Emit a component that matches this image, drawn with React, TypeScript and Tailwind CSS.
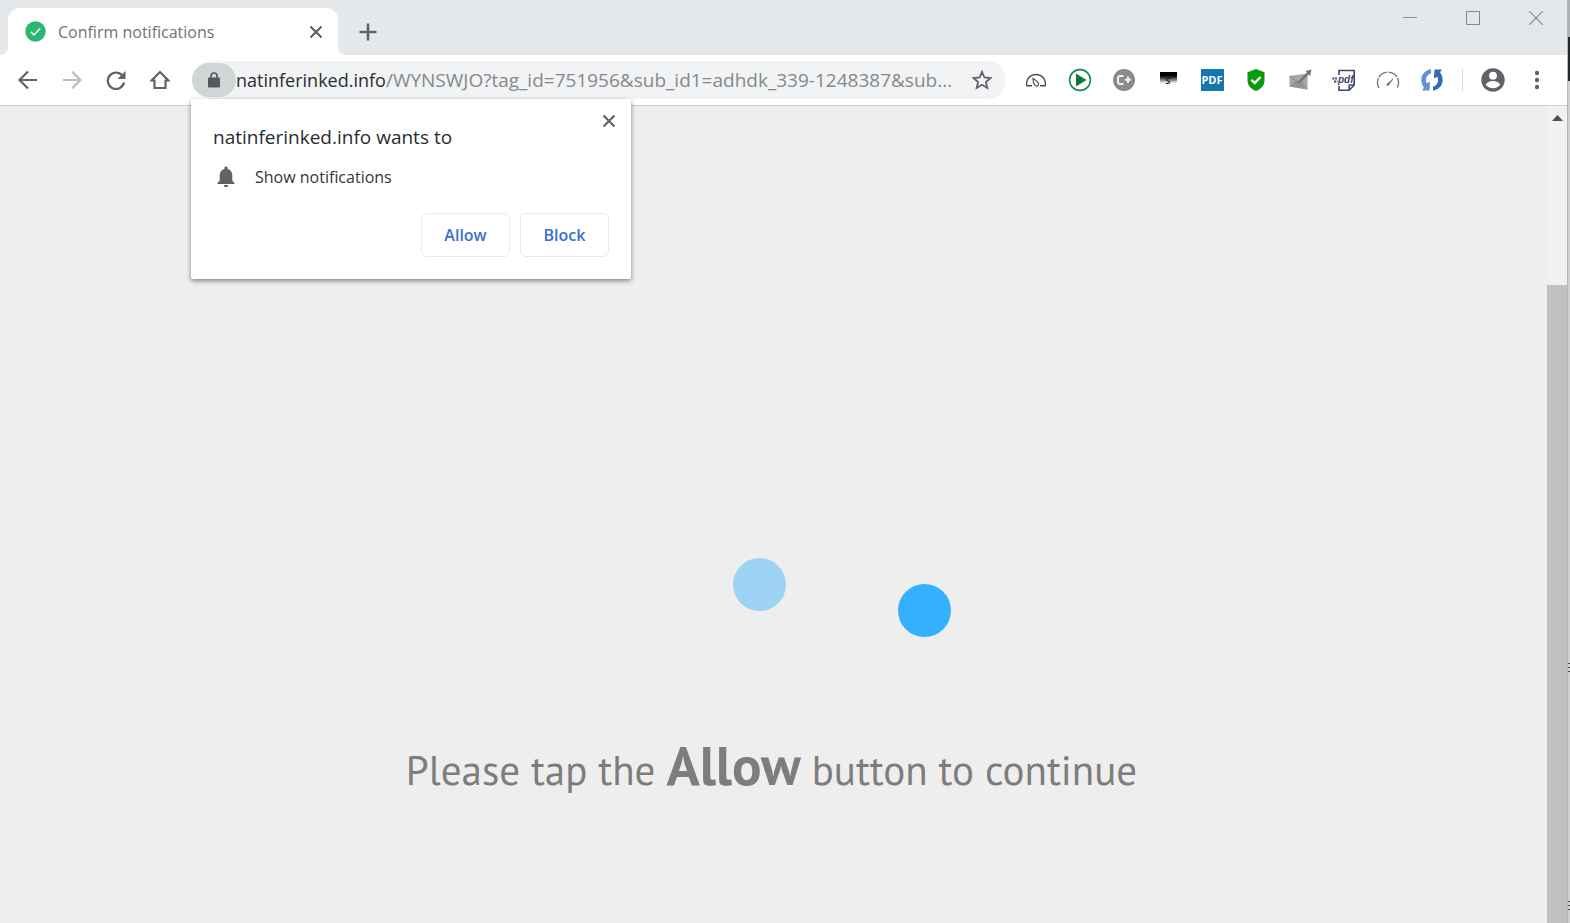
import type { FC, ReactNode } from 'react';

const URL_HOST = 'natinferinked.info';
const URL_PATH = '/WYNSWJO?tag_id=751956&sub_id1=adhdk_339-1248387&sub...';

interface IconButtonProps {
  label: string;
  children: ReactNode;
}

const IconButton: FC<IconButtonProps> = ({ label, children }) => (
  <button type="button" aria-label={label} className="flex size-11 shrink-0 items-center justify-center">
    {children}
  </button>
);

const CloseIcon: FC = () => (
  <svg width="14" height="14" viewBox="0 0 14 14" fill="none" stroke="#5f6368" strokeWidth="2.2">
    <path d="M1.5 1.5l11 11M12.5 1.5l-11 11" />
  </svg>
);

const TabStrip: FC = () => (
  <header className="flex h-[55px] items-end bg-[#e4e8eb]">
    <div className="h-2 w-2 bg-white">
      <div className="h-2 w-2 rounded-br-lg bg-[#e4e8eb]" />
    </div>
    <div className="flex h-[47px] w-[330px] items-center rounded-t-xl bg-white pl-[17px] pr-[15px]">
      <svg width="21" height="21" viewBox="0 0 21 21" fill="none">
        <circle cx="10.5" cy="10.5" r="10.2" fill="#2bb673" />
        <path d="M5.8 10.8l3.2 3.2 6.2-6.6" stroke="#fff" strokeWidth="1.4" />
      </svg>
      <span className="ml-3 flex-1 text-base leading-6 text-[#6f7377]">Confirm notifications</span>
      <button type="button" aria-label="Close tab">
        <CloseIcon />
      </button>
    </div>
    <div className="h-2 w-2 bg-white">
      <div className="h-2 w-2 rounded-bl-lg bg-[#e4e8eb]" />
    </div>
    <button type="button" aria-label="New tab" className="flex h-[47px] w-11 items-center justify-center">
      <svg width="18" height="18" viewBox="0 0 18 18" stroke="#5f6368" strokeWidth="2.6">
        <path d="M9 .5v17M.5 9h17" />
      </svg>
    </button>
    <div className="ml-auto flex self-start">
      <button type="button" aria-label="Minimize" className="flex h-9 w-[63px] items-center justify-center">
        <svg width="14" height="14" viewBox="0 0 14 14" stroke="#8b8e91">
          <path d="M0 6.5h14" />
        </svg>
      </button>
      <button type="button" aria-label="Maximize" className="flex h-9 w-[63px] items-center justify-center">
        <svg width="14" height="14" viewBox="0 0 14 14" fill="none" stroke="#85888b">
          <path d="M.5.5h13v13H.5z" />
        </svg>
      </button>
      <button type="button" aria-label="Close window" className="flex h-9 w-[63px] items-center justify-center">
        <svg width="14" height="14" viewBox="0 0 14 14" stroke="#85888b" strokeWidth="1.1">
          <path d="M0 0l14 14M14 0L0 14" />
        </svg>
      </button>
    </div>
  </header>
);

const Extensions: FC = () => (
  <div className="flex shrink-0 items-center">
    <IconButton label="Speed dial">
      <svg width="22" height="22" viewBox="0 0 22 22" fill="none" stroke="#4b4e51" strokeWidth="1.4">
        <path d="M7 16.8H1.8C.6 10.5 5 5.5 11 5.5s10.4 5 9.2 11.3H15" />
        <path d="M8 9.5c1.5.8 4.2 2.3 5.2 4.3 1 2.2-.6 3.7-2.2 3.2C8.800 16.4 8.2 13 8 9.5z" strokeWidth="1.2" />
      </svg>
    </IconButton>
    <IconButton label="Play">
      <svg width="24" height="24" viewBox="0 0 24 24" fill="none">
        <circle cx="12" cy="12" r="10.4" stroke="#1d8a50" strokeWidth="1.6" />
        <path d="M8 5.5L18.5 12 8 18.5z" fill="#087a3c" />
      </svg>
    </IconButton>
    <IconButton label="C plus">
      <svg width="22" height="22" viewBox="0 0 22 22" fill="none">
        <circle cx="11" cy="11" r="11" fill="#8a8a8a" />
        <path d="M10.5 7H7a2 2 0 0 0-2 2v4a2 2 0 0 0 2 2h3.5M15 7.500v6.500M11.800 10.800h6.400" stroke="#f1f1f1" strokeWidth="2" />
      </svg>
    </IconButton>
    <IconButton label="Session">
      <span className="mb-0.5 flex h-3.5 w-[17px] items-end justify-center bg-linear-to-b from-black from-20% to-white to-80% font-['Noto_Sans'] text-[11px] leading-3 text-black">
        s
      </span>
    </IconButton>
    <IconButton label="PDF">
      <span className="flex h-[22px] w-[23px] items-center justify-center bg-[#1478b0] font-['Open_Sans'] text-[11px] leading-4 font-bold text-white">
        PDF
      </span>
    </IconButton>
    <IconButton label="Shield">
      <svg width="18" height="22" viewBox="0 0 18 22" fill="none">
        <path d="M9 0l8.5 3.300v8.200c0 5-3.500 8.500-8.500 10.500-5-2-8.500-5.500-8.500-10.500V3.300z" fill="#0a9b0a" />
        <path d="M4.500 10.800l3.200 3.200 5.800-6" stroke="#fff" strokeWidth="2.4" />
      </svg>
    </IconButton>
    <IconButton label="Mail">
      <svg width="23" height="22" viewBox="0 0 23 22" fill="none">
        <path d="M.5 7L18.5 4.500v16L.5 17.500z" fill="#a6a6a6" />
        <path d="M.5 17.500l6.500-6 3 2.500 2.500-2.500 6 9z" fill="#949494" />
        <path d="M.5 7l9.500 7 8.500-9" stroke="#858585" />
        <path d="M8 13.500L18 3.500 16.500 2 22.500.5 21 7l-1.500-1.500L10.500 14z" fill="#737373" />
      </svg>
    </IconButton>
    <IconButton label="Save as PDF">
      <svg width="24" height="23" viewBox="0 0 24 23" fill="none" stroke="#3f476b" strokeWidth="1.6">
        <path d="M7 6V1.500h15.200V16l-5 5.200H7V17" />
        <path d="M17.200 21v-5h5" />
        <path d="M.5 9.500h4.500M2 12.500h3.500" strokeWidth="1.8" strokeDasharray="2 .7" />
        <text x="6" y="14" fill="#3f476b" stroke="none" fontFamily="Liberation Sans" fontSize="10" fontWeight="700" fontStyle="italic">pdf</text>
      </svg>
    </IconButton>
    <IconButton label="Speed test">
      <svg width="24" height="22" viewBox="0 0 24 22" fill="none" stroke="#77797b" strokeWidth="1.4">
        <path d="M3 19A10.500 10.500 0 1 1 21 19" strokeDasharray="10 1.2" />
        <path d="M10.500 15.800l6.500-6-4.700 6.800z" fill="#66696b" strokeWidth=".8" />
      </svg>
    </IconButton>
    <IconButton label="Sync">
      <svg width="22" height="22" viewBox="0 0 22 22">
        <path d="M10 .3v4.200C6 5.500 3.700 10 5.700 14.300L9 12.500l-.5 9H1l2-2.800C-2 12 0 2 10 .3z" fill="#6590d2" />
        <path d="M12 21.700v-4.200c4-1 6.300-5.500 4.300-9.800L13 9.500l.5-9H21l-2 2.800C24 10 22 20 12 21.700z" fill="#356ab8" />
      </svg>
    </IconButton>
    <div className="mx-2 h-[22px] w-px bg-[#d5d7d9]" />
    <IconButton label="Profile">
      <svg width="24" height="24" viewBox="0 0 24 24">
        <circle cx="12" cy="12" r="11.7" fill="#5f6368" />
        <circle cx="12" cy="7.7" r="3.9" fill="#fff" />
        <path d="M4.700 16.500c1.500-2.500 4.500-3.500 7.300-3.500s5.800 1 7.300 3.500C17.500 19 15 20.300 12 20.300S6.500 19 4.700 16.500z" fill="#fff" />
      </svg>
    </IconButton>
    <IconButton label="Menu">
      <svg width="6" height="20" viewBox="0 0 6 20" fill="#5f6368">
        <circle cx="3" cy="3" r="2.2" />
        <circle cx="3" cy="10" r="2.2" />
        <circle cx="3" cy="17" r="2.2" />
      </svg>
    </IconButton>
  </div>
);

const PermissionPrompt: FC = () => (
  <section
    aria-label="Permission request"
    className="absolute top-[38px] -left-px w-[440px] rounded-xs bg-white p-[22px] shadow-[0_2px_5px_rgba(0,0,0,0.45)]"
  >
    <button type="button" aria-label="Close" className="absolute top-[15px] right-[15px]">
      <CloseIcon />
    </button>
    <h2 className="text-[19px] leading-8 text-[#292c30]">{URL_HOST} wants to</h2>
    <div className="mt-2 flex items-center">
      <svg width="18" height="22" viewBox="0 0 18 22" fill="#5f6368" className="ml-1">
        <path d="M9 .5c.9 0 1.600.7 1.600 1.500v1c3 .7 4.700 3.200 4.700 6.500v5l2.200 2.500v1H.5v-1l2.200-2.500v-5C2.700 6.200 4.400 3.700 7.400 3V2C7.400 1.200 8.100.5 9 .5zM6.700 19h4.600c0 1.300-1 2.200-2.300 2.200S6.700 20.300 6.700 19z" />
      </svg>
      <p className="ml-5 text-base leading-8 text-[#33363a]">Show notifications</p>
    </div>
    <div className="mt-5 flex justify-end gap-2.5 text-base font-semibold text-[#3871ce]">
      <button type="button" className="h-11 w-[89px] rounded-md border border-[#e8eaed]">
        Allow
      </button>
      <button type="button" className="h-11 w-[89px] rounded-md border border-[#e8eaed]">
        Block
      </button>
    </div>
  </section>
);

const Toolbar: FC = () => (
  <nav className="flex h-[51px] items-center border-b border-[#cfcfcf] bg-white pr-2 pl-1.5">
    <IconButton label="Back">
      <svg width="20" height="20" viewBox="0 0 20 20" fill="none" stroke="#5f6368" strokeWidth="2.2">
        <path d="M19 10H2M10 1.500L1.500 10l8.500 8.500" />
      </svg>
    </IconButton>
    <IconButton label="Forward">
      <svg width="20" height="20" viewBox="0 0 20 20" fill="none" stroke="#bcbec0" strokeWidth="2.2">
        <path d="M1 10h17M10 1.500l8.500 8.500-8.500 8.500" />
      </svg>
    </IconButton>
    <IconButton label="Reload">
      <svg width="20" height="20" viewBox="0 0 20 20" fill="none">
        <path d="M17 6.500A8.200 8.200 0 1 0 18 12.500" stroke="#5f6368" strokeWidth="2.3" />
        <path d="M19.500 1v8h-8z" fill="#5f6368" />
      </svg>
    </IconButton>
    <IconButton label="Home">
      <svg width="20" height="20" viewBox="0 0 20 20" fill="none" stroke="#5f6368" strokeWidth="2.2">
        <path d="M1.500 10.500L10 2l8.500 8.500h-3V18h-11v-7.500z" />
      </svg>
    </IconButton>
    <div className="relative ml-2.5 flex h-[38px] min-w-0 flex-1 items-center rounded-full bg-[#f1f3f4]">
      <button type="button" aria-label="Site information" className="flex h-[34px] w-11 shrink-0 items-center justify-center rounded-full bg-[#d2d5d6]">
        <svg width="12" height="16" viewBox="0 0 12 16" fill="none">
          <rect y="5.5" width="12" height="10" rx="1.3" fill="#55585c" />
          <path d="M3 6V4a3 3 0 0 1 6 0v2" stroke="#55585c" strokeWidth="1.6" />
        </svg>
      </button>
      <p className="flex-1 text-[19px] leading-8 whitespace-nowrap text-[#85898d]">
        <span className="text-lg leading-8 text-[#2b2e32]">{URL_HOST}</span>
        {URL_PATH}
      </p>
      <button type="button" aria-label="Bookmark" className="mr-3.5 shrink-0">
        <svg width="20" height="20" viewBox="0 0 20 20" fill="none" stroke="#5f6368" strokeWidth="1.8">
          <path d="M10 1.800l2.400 5.700 6.100.5-4.600 4 1.400 6-5.300-3.200L4.700 18l1.400-6-4.600-4 6.100-.5z" />
        </svg>
      </button>
      <PermissionPrompt />
    </div>
    <div className="w-2 shrink-0" />
    <Extensions />
  </nav>
);

const Page: FC = () => (
  <div className="flex flex-1 bg-[#eee]">
    <main className="flex min-w-0 flex-1 flex-col items-center pt-[452px] pr-1">
      <div className="ml-[140px] flex w-[218px] items-start justify-between" role="status" aria-label="Loading">
        <div className="size-[53px] rounded-full bg-[#9dd4f5]" />
        <div className="mt-[26px] size-[53px] rounded-full bg-[#33b1ff]" />
      </div>
      <p className="mt-[92px] text-center font-['PT_Sans','Noto_Sans',sans-serif] text-[41px] leading-[72px] text-[#7d7d7d]">
        Please tap the <strong className="text-[55px] font-semibold">Allow</strong> button to continue
      </p>
    </main>
    <div className="flex w-5 flex-col items-center bg-[#f1f1f1]" aria-hidden="true">
      <svg width="11" height="6" viewBox="0 0 11 6" fill="#505050" className="mt-[9px]">
        <path d="M0 6L5.500 0 11 6z" />
      </svg>
      <div className="mt-[164px] w-full flex-1 bg-[#c1c1c1]" />
    </div>
  </div>
);

const EdgeMark: FC = () => (
  <div className="flex h-[9px] flex-col justify-between">
    <div className="h-px bg-[#4a4a4a]" />
    <div className="h-px bg-[#4a4a4a]" />
    <div className="h-px bg-[#4a4a4a]" />
  </div>
);

// Sliver of the window behind the browser
const DesktopEdge: FC = () => (
  <div className="flex w-[3px] flex-col border-l border-[#b4b6b8] bg-[#d0d0d0]" aria-hidden="true">
    <div className="h-[37px] bg-[#aeb1b3]" />
    <div className="h-11 bg-[#25282b]" />
    <div className="mt-auto mb-[229px]">
      <EdgeMark />
    </div>
    <div className="mb-[13px]">
      <EdgeMark />
    </div>
  </div>
);

const App: FC = () => (
  <div className="flex min-h-screen font-['Segoe_UI','Open_Sans',sans-serif]">
    <div className="flex min-w-0 flex-1 flex-col">
      <TabStrip />
      <Toolbar />
      <Page />
    </div>
    <DesktopEdge />
  </div>
);

export default App;
